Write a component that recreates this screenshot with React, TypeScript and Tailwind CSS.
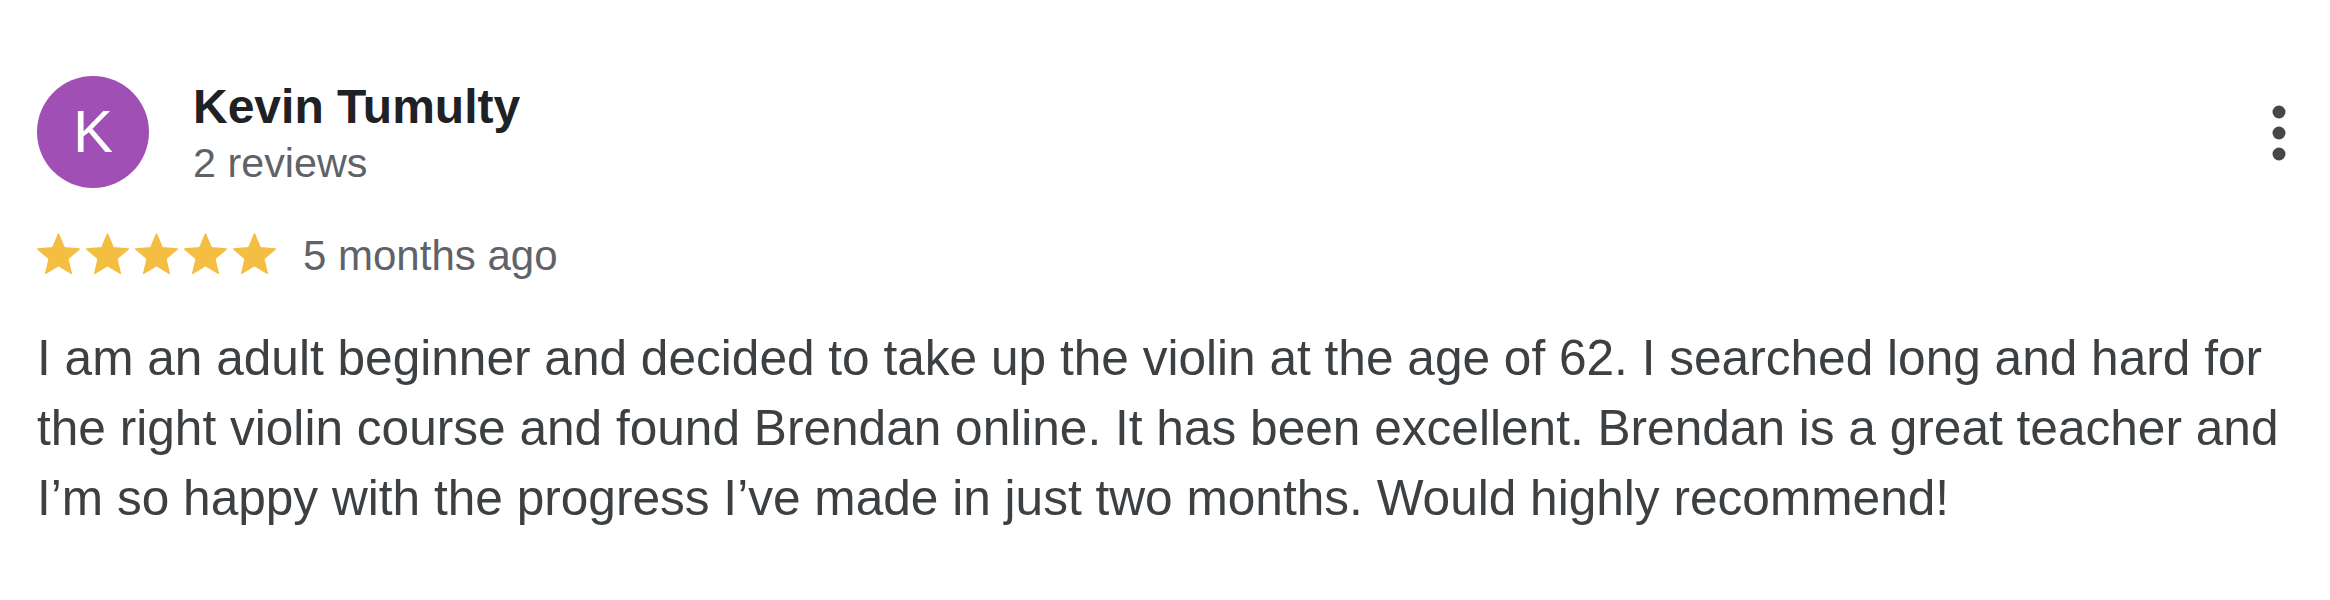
import React from "react";

const Star: React.FC = () => (
  <svg
    width="43"
    height="42"
    viewBox="1.7 1.7 20.6 19.9"
    className="shrink-0"
  >
    <path
      d="M12 17.27L18.18 21l-1.64-7.03L22 9.24l-7.19-.61L12 2 9.19 8.63 2 9.24l5.46 4.73L5.82 21z"
      fill="#f4be42"
      stroke="#f4be42"
      strokeWidth="0.6"
      strokeLinejoin="round"
    />
  </svg>
);

const App: React.FC = () => {
  const text =
    "I am an adult beginner and decided to take up the violin at the age of 62. I searched long and hard for the right violin course and found Brendan online. It has been excellent. Brendan is a great teacher and I\u2019m so happy with the progress I\u2019ve made in just two months. Would highly recommend!";

  return (
    <div
      className="min-h-screen bg-white pl-[37px] pr-[20px] pt-[76px]"
      style={{ fontFamily: '"Liberation Sans", Arial, Helvetica, sans-serif' }}
    >
      {/* header */}
      <div className="flex items-start justify-between">
        <div className="flex items-start">
          <div className="flex h-[112px] w-[112px] shrink-0 items-center justify-center rounded-full bg-[#a04fb5] text-[60px] leading-none text-white">
            K
          </div>
          <div className="ml-[44px] pt-[5px]">
            <div className="text-[48px] font-bold leading-[52px] text-[#202124]">
              Kevin Tumulty
            </div>
            <div className="mt-[5px] text-[41.3px] leading-[50px] text-[#5f6368]">
              2 reviews
            </div>
          </div>
        </div>
        <button className="mr-[19px] mt-[29px] flex h-[56px] w-[24px] items-center justify-center">
          <svg width="24" height="56" viewBox="0 0 24 56">
            <circle cx="12" cy="7" r="6.5" fill="#474747" />
            <circle cx="12" cy="28" r="6.5" fill="#474747" />
            <circle cx="12" cy="49" r="6.5" fill="#474747" />
          </svg>
        </button>
      </div>

      {/* rating */}
      <div className="mt-[45px] flex h-[42px] items-center">
        <div className="flex gap-[6px]">
          <Star />
          <Star />
          <Star />
          <Star />
          <Star />
        </div>
        <span className="ml-[27px] pt-[3px] text-[42px] leading-[42px] text-[#5f6368]">
          5 months ago
        </span>
      </div>

      {/* body */}
      <p className="mt-[48px] text-[49.6px] leading-[70px] text-[#3c4043]">
        {text}
      </p>
    </div>
  );
};

export default App;
